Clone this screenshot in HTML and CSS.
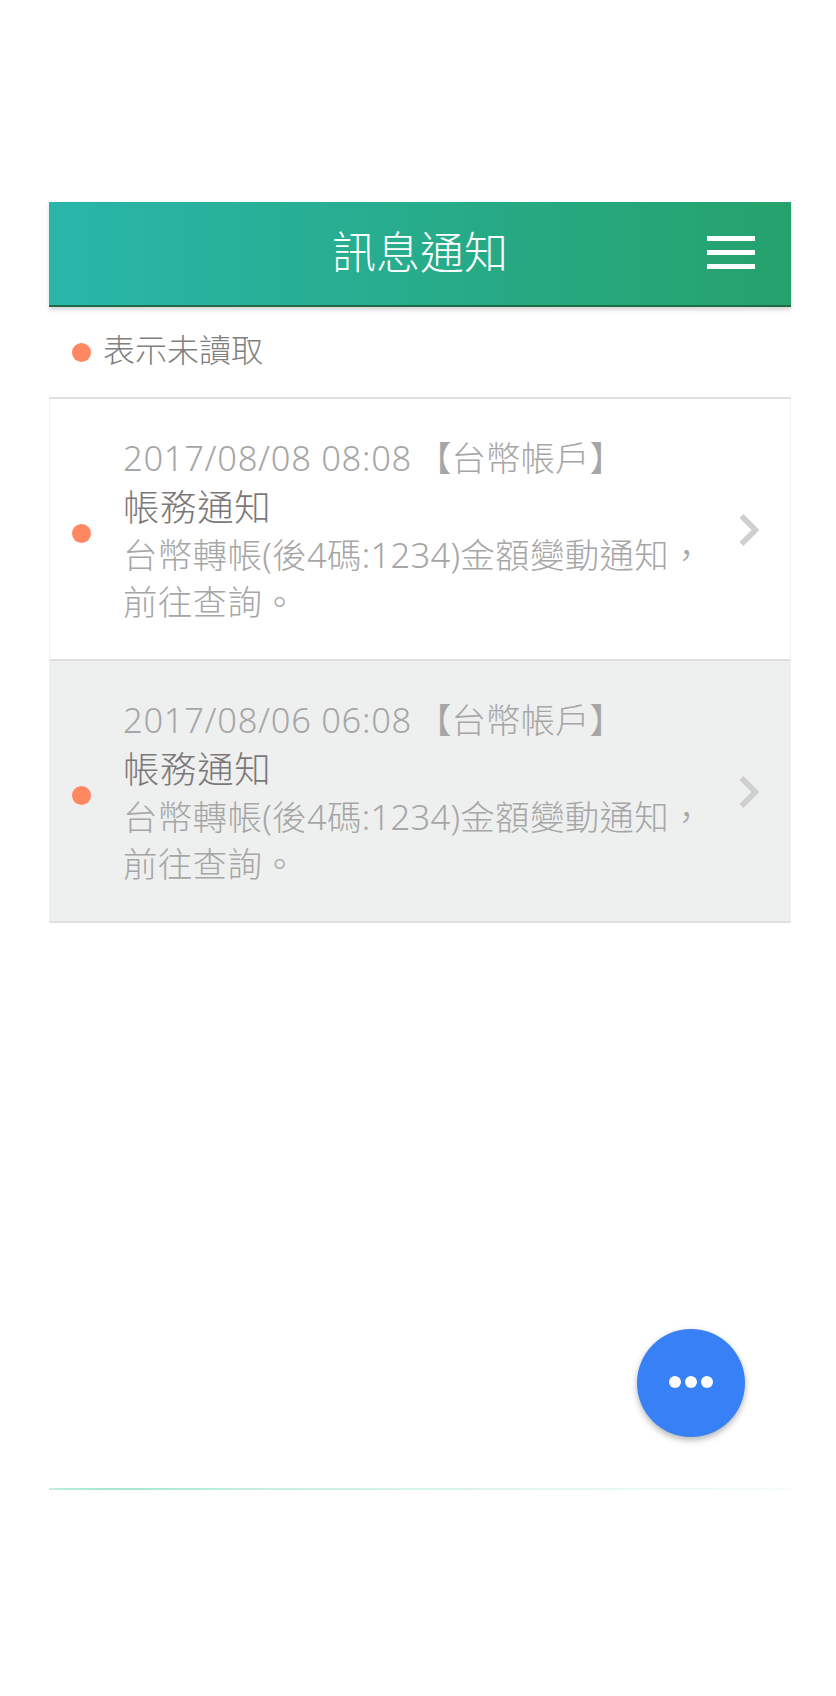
FILE: index.html
```html
<!DOCTYPE html>
<html lang="zh-Hant">
<head>
    <meta charset="UTF-8">
    <title>訊息通知</title>
    <link rel="stylesheet" href="styles.css">
</head>
<body>
    <div class="screen">
        <header class="app-header">
            <h1>訊息通知</h1>
            <div class="menu-icon"><span></span><span></span><span></span></div>
        </header>

        <main class="content">
            <div class="legend">
                <span class="dot"></span>
                <span class="legend-text">表示未讀取</span>
            </div>

            <div class="msg-list">
                <div class="msg-item">
                    <span class="dot"></span>
                    <div class="msg-body">
                        <p class="msg-date"><span class="num">2017/08/08 08:08</span> <span class="msg-account">【台幣帳戶】</span></p>
                        <p class="msg-title">帳務通知</p>
                        <p class="msg-text">台幣轉帳(後4碼:1234)金額變動通知，前往查詢。</p>
                    </div>
                    <svg class="chevron" viewBox="0 0 20 32"><path d="M2.5 2 16.5 16 2.5 30"/></svg>
                </div>
                <div class="msg-item read">
                    <span class="dot"></span>
                    <div class="msg-body">
                        <p class="msg-date"><span class="num">2017/08/06 06:08</span> <span class="msg-account">【台幣帳戶】</span></p>
                        <p class="msg-title">帳務通知</p>
                        <p class="msg-text">台幣轉帳(後4碼:1234)金額變動通知，前往查詢。</p>
                    </div>
                    <svg class="chevron" viewBox="0 0 20 32"><path d="M2.5 2 16.5 16 2.5 30"/></svg>
                </div>
            </div>
        </main>

        <div class="footer-line"></div>

        <button class="fab"><span></span><span></span><span></span></button>
    </div>
</body>
</html>
```

FILE: styles.css
```css
* {
    margin: 0;
    padding: 0;
    box-sizing: border-box;
}

body {
    background: #ffffff;
    font-family: "Noto Sans", "Noto Sans CJK TC", sans-serif;
    font-weight: 300;
}

.screen {
    position: relative;
    width: 836px;
    height: 1696px;
    padding: 202px 45px 0 49px;
}

/* Header */
.app-header {
    position: relative;
    display: flex;
    justify-content: center;
    align-items: center;
    height: 105px;
    background: linear-gradient(90deg, #29b6aa 0%, #25a26c 100%);
    border-bottom: 2px solid #1f6b48;
    box-shadow: 0 3px 4px rgba(0, 0, 0, 0.16);
}

.app-header h1 {
    padding-bottom: 4px;
    color: #ffffff;
    font-size: 44px;
    font-weight: 300;
    line-height: 1;
}

.menu-icon {
    position: absolute;
    right: 36px;
    top: 34px;
    display: flex;
    flex-direction: column;
    gap: 9px;
    width: 48px;
}

.menu-icon span {
    height: 5px;
    background: #ffffff;
}

/* Content */
.content {
    height: 1181px;
}

.dot {
    flex: none;
    width: 19px;
    height: 19px;
    border-radius: 50%;
    background: #ff8762;
}

.legend {
    display: flex;
    align-items: center;
    gap: 12px;
    height: 90px;
    padding-left: 23px;
    color: #808080;
    font-size: 32px;
}

.legend-text {
    padding-bottom: 8px;
}

.msg-list {
    border-top: 2px solid #e0e0e0;
}

.msg-item {
    display: flex;
    align-items: center;
    height: 262px;
    padding: 0 31px 0 22px;
    border-bottom: 2px solid #e0e0e0;
    border-left: 1px solid #f4f4f4;
    border-right: 1px solid #f4f4f4;
}

.msg-item.read {
    background: #eef0ef;
    border-left-color: transparent;
    border-right-color: transparent;
}

.msg-item .dot {
    margin-top: 8px;
}

.msg-body {
    flex: 1;
    padding-left: 32px;
    padding-right: 20px;
    font-size: 34.5px;
    line-height: 47px;
    color: #a6a6a6;
}

.num {
    letter-spacing: 0.7px;
}

.msg-date {
    margin-bottom: 3px;
}

.msg-account {
    margin-left: -4px;
}

.msg-title {
    color: #7d7878;
    font-size: 36.5px;
    letter-spacing: 0.6px;
}

.msg-text {
    letter-spacing: 0.3px;
}

.chevron {
    flex: none;
    width: 20px;
    height: 32px;
    margin-top: 1px;
    fill: none;
    stroke: #cfcfcf;
    stroke-width: 5.5;
}

.footer-line {
    height: 2px;
    background: linear-gradient(90deg, #bfeee0 0%, #a3e6d2 8%, #c8efe3 30%, #e0f6f0 65%, #f6fcfa 100%);
}

/* Floating button */
.fab {
    position: absolute;
    left: 637px;
    top: 1329px;
    display: flex;
    justify-content: center;
    align-items: center;
    gap: 4px;
    width: 108px;
    height: 108px;
    padding-bottom: 2px;
    border: none;
    border-radius: 50%;
    background: #3880f6;
    box-shadow: 0 3px 6px rgba(0, 0, 0, 0.3);
}

.fab span {
    width: 12px;
    height: 12px;
    border-radius: 50%;
    background: #ffffff;
}
```
